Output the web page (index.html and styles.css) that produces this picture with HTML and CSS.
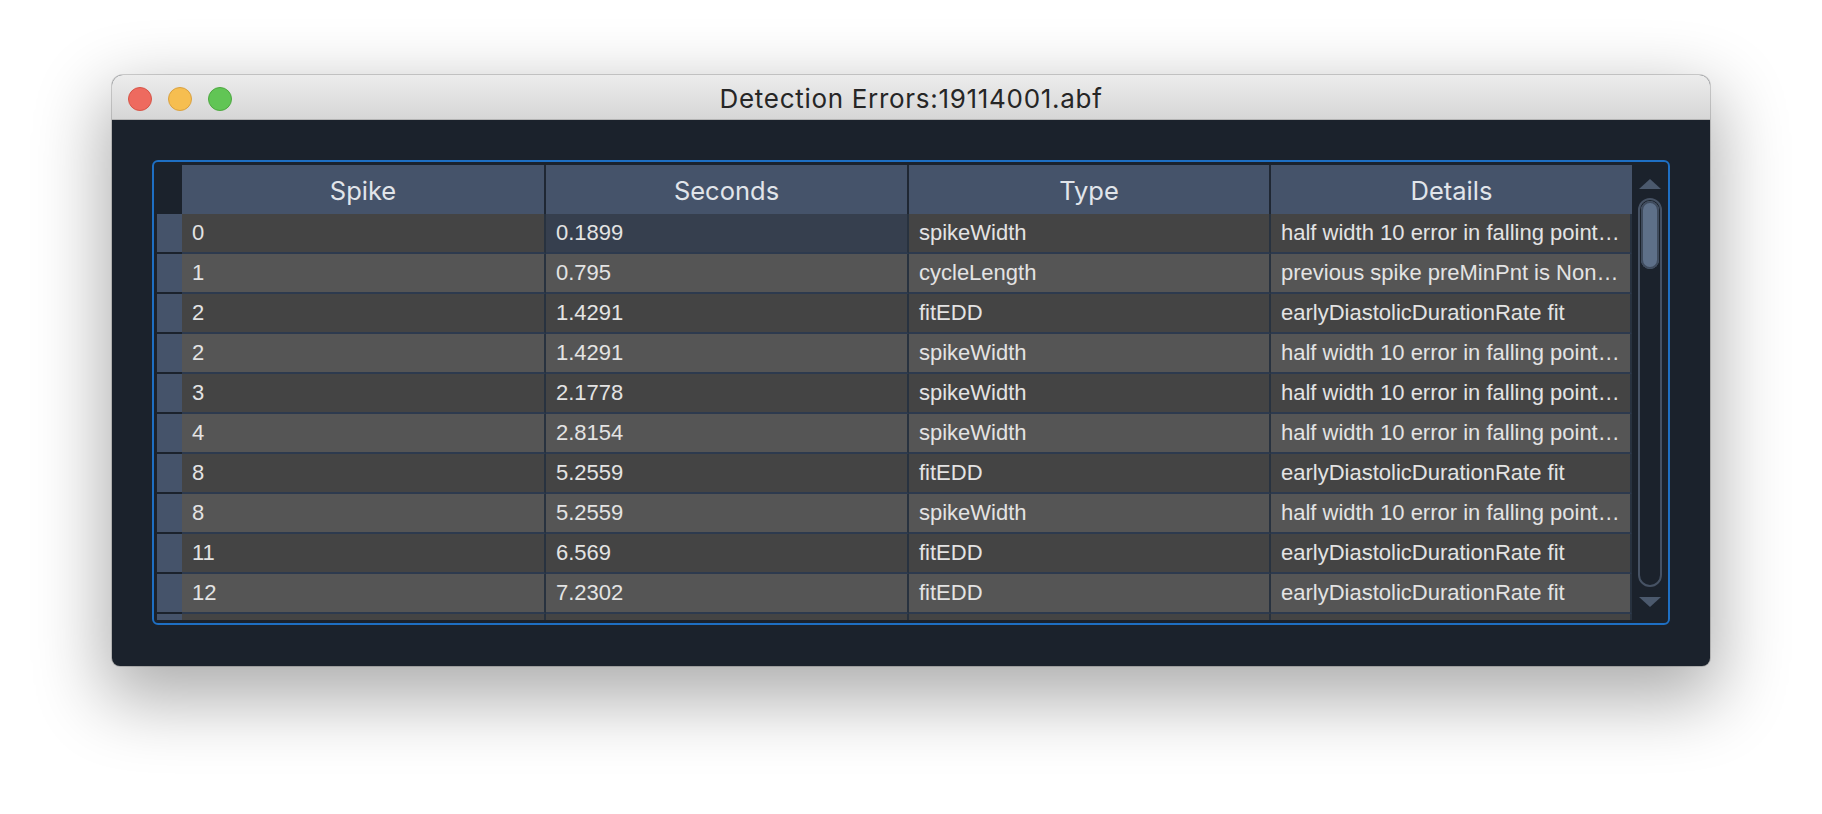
FILE: index.html
```html
<!DOCTYPE html>
<html>
<head>
<meta charset="utf-8">
<title>Detection Errors:19114001.abf</title>
<link rel="stylesheet" href="styles.css">
</head>
<body>
<div class="window">
  <div class="titlebar">
    <div class="lights">
      <span class="tl red"></span>
      <span class="tl yellow"></span>
      <span class="tl green"></span>
    </div>
    <div class="title">Detection Errors:19114001.abf</div>
  </div>
  <div class="content">
    <div class="frame">
      <div class="viewport">
        <div class="row head">
          <div class="corner"></div>
          <div class="hcell">Spike</div>
          <div class="hcell">Seconds</div>
          <div class="hcell">Type</div>
          <div class="hcell">Details</div>
        </div>
        <div class="row even">
          <div class="rh"></div>
          <div class="cell">0</div>
          <div class="cell sel">0.1899</div>
          <div class="cell">spikeWidth</div>
          <div class="cell">half width 10 error in falling point…</div>
        </div>
        <div class="row odd">
          <div class="rh"></div>
          <div class="cell">1</div>
          <div class="cell">0.795</div>
          <div class="cell">cycleLength</div>
          <div class="cell">previous spike preMinPnt is Non…</div>
        </div>
        <div class="row even">
          <div class="rh"></div>
          <div class="cell">2</div>
          <div class="cell">1.4291</div>
          <div class="cell">fitEDD</div>
          <div class="cell">earlyDiastolicDurationRate fit</div>
        </div>
        <div class="row odd">
          <div class="rh"></div>
          <div class="cell">2</div>
          <div class="cell">1.4291</div>
          <div class="cell">spikeWidth</div>
          <div class="cell">half width 10 error in falling point…</div>
        </div>
        <div class="row even">
          <div class="rh"></div>
          <div class="cell">3</div>
          <div class="cell">2.1778</div>
          <div class="cell">spikeWidth</div>
          <div class="cell">half width 10 error in falling point…</div>
        </div>
        <div class="row odd">
          <div class="rh"></div>
          <div class="cell">4</div>
          <div class="cell">2.8154</div>
          <div class="cell">spikeWidth</div>
          <div class="cell">half width 10 error in falling point…</div>
        </div>
        <div class="row even">
          <div class="rh"></div>
          <div class="cell">8</div>
          <div class="cell">5.2559</div>
          <div class="cell">fitEDD</div>
          <div class="cell">earlyDiastolicDurationRate fit</div>
        </div>
        <div class="row odd">
          <div class="rh"></div>
          <div class="cell">8</div>
          <div class="cell">5.2559</div>
          <div class="cell">spikeWidth</div>
          <div class="cell">half width 10 error in falling point…</div>
        </div>
        <div class="row even">
          <div class="rh"></div>
          <div class="cell">11</div>
          <div class="cell">6.569</div>
          <div class="cell">fitEDD</div>
          <div class="cell">earlyDiastolicDurationRate fit</div>
        </div>
        <div class="row odd">
          <div class="rh"></div>
          <div class="cell">12</div>
          <div class="cell">7.2302</div>
          <div class="cell">fitEDD</div>
          <div class="cell">earlyDiastolicDurationRate fit</div>
        </div>
        <div class="row even partial">
          <div class="rh"></div>
          <div class="cell"></div>
          <div class="cell"></div>
          <div class="cell"></div>
          <div class="cell"></div>
        </div>
      </div>
      <div class="scrollbar">
        <div class="arrow up"></div>
        <div class="track"><div class="thumb"></div></div>
        <div class="arrow down"></div>
      </div>
    </div>
  </div>
</div>
</body>
</html>
```

FILE: styles.css
```css
html, body {
  margin: 0;
  padding: 0;
  background: #ffffff;
  width: 1822px;
  height: 814px;
  overflow: hidden;
}

body {
  padding-top: 75px;
  padding-left: 112px;
  box-sizing: border-box;
}

.window {
  width: 1598px;
  height: 591px;
  border-radius: 11px 11px 8px 8px;
  overflow: hidden;
  background: #1b222c;
  box-shadow: 0 26px 70px 8px rgba(0, 0, 0, 0.32), 0 0 0 1px rgba(0, 0, 0, 0.16);
  display: flex;
  flex-direction: column;
}

.titlebar {
  height: 44px;
  flex: none;
  position: relative;
  background: linear-gradient(#ececec, #d6d6d6);
  border-bottom: 1px solid #b4b4b4;
  display: flex;
  align-items: center;
  justify-content: center;
}

.lights {
  position: absolute;
  left: 16px;
  top: 12px;
  display: flex;
  gap: 16px;
}

.tl {
  width: 22px;
  height: 22px;
  border-radius: 50%;
  display: block;
}
.red { background: #ee6a5f; border: 1px solid #d65548; }
.yellow { background: #f6be50; border: 1px solid #d9a141; }
.green { background: #61c555; border: 1px solid #4ea841; }

.title {
  font-family: Inter, "Liberation Sans", sans-serif;
  font-size: 26px;
  color: #262626;
  padding-top: 3px;
  letter-spacing: 0.7px;
}

.content {
  flex: 1;
  min-height: 0;
  padding: 40px 40px 41px 40px;
  display: flex;
}

.frame {
  flex: 1;
  min-height: 0;
  border: 2px solid #1e6fc3;
  border-radius: 6px;
  padding: 3px;
  display: flex;
  overflow: hidden;
}

.viewport {
  width: 1475px;
  flex: none;
  min-height: 0;
  overflow: hidden;
  display: flex;
  flex-direction: column;
}

.row {
  display: grid;
  grid-template-columns: 25px 364px 363px 362px 361px;
  flex: none;
  height: 40px;
}

.head {
  height: 49px;
}

.corner {
  background: #1b222c;
}

.hcell {
  background: #45536a;
  color: #e1e5ea;
  font-family: Inter, "Liberation Sans", sans-serif;
  font-size: 25.5px;
  line-height: 46px;
  padding-top: 3px;
  text-align: center;
  border-right: 2px solid #1f2733;
}
.hcell:last-child { border-right: none; }

.rh {
  background: #45536a;
  border-bottom: 2px solid #1b222c;
}

.cell {
  font-family: "Liberation Sans", Arial, sans-serif;
  font-size: 22px;
  line-height: 38px;
  color: #e3e3e3;
  padding-left: 10px;
  border-right: 2px solid #28323f;
  border-bottom: 2px solid #2d3a4e;
  white-space: nowrap;
  overflow: hidden;
}

.even .cell { background: #444444; }
.odd .cell { background: #555555; }
.even .cell.sel { background: #363f4e; }

.scrollbar {
  flex: 1;
  display: flex;
  flex-direction: column;
  align-items: center;
  padding-top: 14px;
  padding-bottom: 13px;
  padding-left: 2px;
}

.arrow {
  width: 0;
  height: 0;
  border-left: 11px solid transparent;
  border-right: 11px solid transparent;
  flex: none;
}
.arrow.up { border-bottom: 10px solid #4b596d; margin-bottom: 9px; }
.arrow.down { border-top: 10px solid #4b596d; margin-top: 10px; }

.track {
  width: 24px;
  flex: 1;
  box-sizing: border-box;
  border: 2px solid #465264;
  border-radius: 12px;
  padding: 1px;
}

.thumb {
  height: 68px;
  border-radius: 10px;
  background: #5e7089;
  box-shadow: inset 0 0 0 2px #3f4b5d;
}
```
